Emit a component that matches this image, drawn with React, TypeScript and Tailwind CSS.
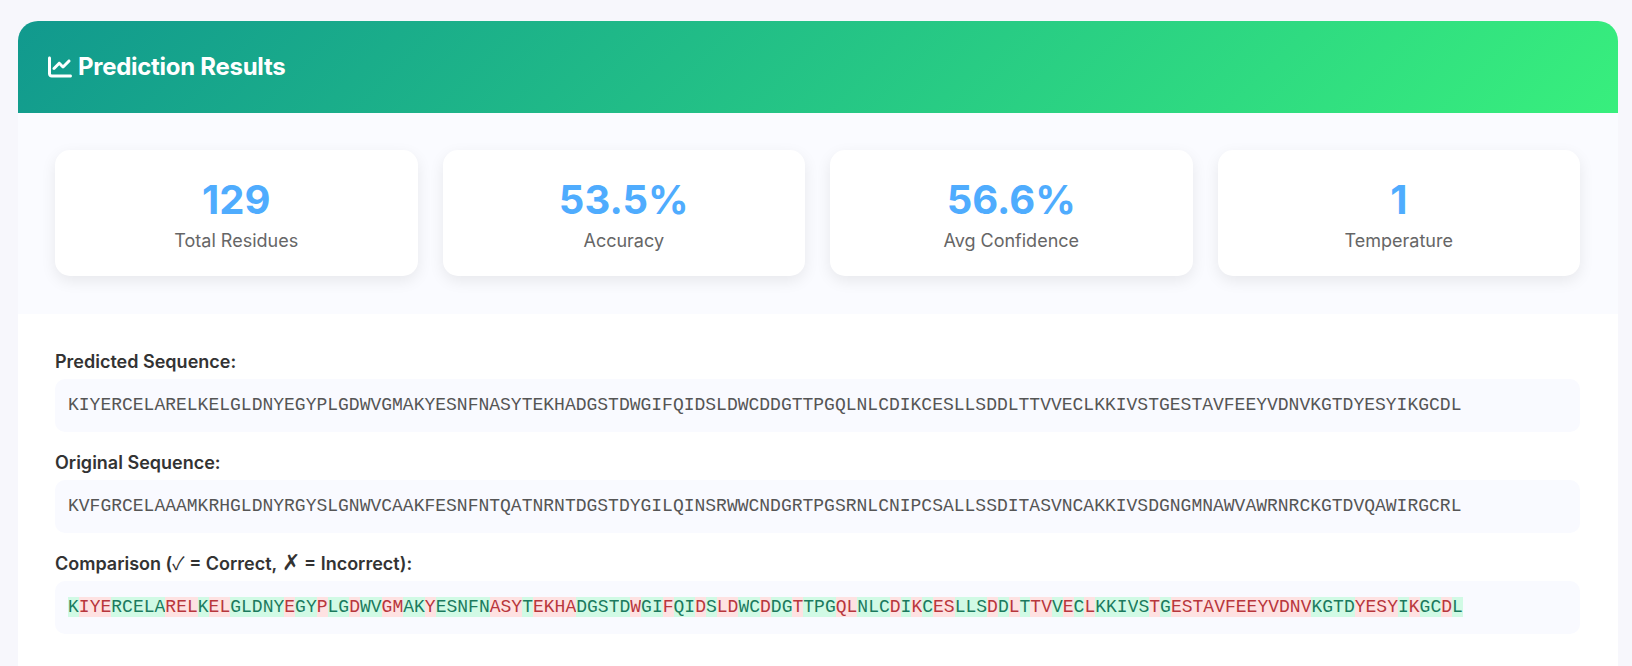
import { FaChartLine } from 'react-icons/fa6';

const predicted =
  'KIYERCELARELKELGLDNYEGYPLGDWVGMAKYESNFNASYTEKHADGSTDWGIFQIDSLDWCDDGTTPGQLNLCDIKCESLLSDDLTTVVECLKKIVSTGESTAVFEEYVDNVKGTDYESYIKGCDL';
const original =
  'KVFGRCELAAAMKRHGLDNYRGYSLGNWVCAAKFESNFNTQATNRNTDGSTDYGILQINSRWWCNDGRTPGSRNLCNIPCSALLSSDITASVNCAKKIVSDGNGMNAWVAWRNRCKGTDVQAWIRGCRL';

const stats = [
  { value: '129', label: 'Total Residues' },
  { value: '53.5%', label: 'Accuracy' },
  { value: '56.6%', label: 'Avg Confidence' },
  { value: '1', label: 'Temperature' },
];

function SequenceLabel({ children }: { children: React.ReactNode }) {
  return <div className="h-[22px] text-[18px] leading-[22px] font-semibold text-[#333]">{children}</div>;
}

function SequenceBox({ children }: { children: React.ReactNode }) {
  return (
    <div className="mb-[20px] mt-[6px] h-[53px] rounded-[10px] bg-[#f9faff] px-[13px] py-[14px] font-['Liberation_Mono',monospace] text-[18px] leading-[25px] whitespace-nowrap text-[#555]">
      {children}
    </div>
  );
}

export default function App() {
  return (
    <div className="h-[666px] overflow-hidden bg-[#f7f7fc] pl-[18px] pr-[14px] pt-[21px] font-['Inter',sans-serif]">
      <div className="h-full overflow-hidden rounded-t-[20px] bg-white">
        <div className="flex h-[92px] items-center gap-[6px] bg-[linear-gradient(135deg,#11998e,#38ef7d)] px-[30px] text-white">
          <FaChartLine className="h-6 w-6" />
          <h2 className="text-2xl font-bold tracking-[-0.28px]">Prediction Results</h2>
        </div>

        <div className="grid grid-cols-4 gap-[25px] bg-[#fafbff] pb-[38px] pl-[37px] pr-[38px] pt-[37px]">
          {stats.map((stat) => (
            <div key={stat.label} className="h-[126px] rounded-[15px] bg-white pt-[26px] text-center shadow-[0_5px_15px_rgba(0,0,0,0.08)]">
              <div className="text-[40px] leading-[48px] font-bold text-[#4facfe]">{stat.value}</div>
              <div className="mt-[6px] text-[18px] leading-[22px] text-[#666]">{stat.label}</div>
            </div>
          ))}
        </div>

        <div className="pl-[37px] pr-[38px] pt-[37px]">
          <SequenceLabel>Predicted Sequence:</SequenceLabel>
          <SequenceBox>{predicted}</SequenceBox>

          <SequenceLabel>Original Sequence:</SequenceLabel>
          <SequenceBox>{original}</SequenceBox>

          <SequenceLabel>
            Comparison (<span className="font-['Noto_Sans_CJK_JP',sans-serif] leading-[0] font-normal">✓</span> = Correct, <span className="font-['Noto_Sans_CJK_JP',sans-serif] text-[22px] leading-[0] font-normal">✗</span> = Incorrect):
          </SequenceLabel>
          <SequenceBox>
            {predicted.split('').map((residue, i) =>
              residue === original[i] ? (
                <span key={i} className="bg-[#d1fae5] text-[#1b7a5e]">{residue}</span>
              ) : (
                <span key={i} className="bg-[#fee2e2] text-[#b8363c]">{residue}</span>
              ),
            )}
          </SequenceBox>
        </div>
      </div>
    </div>
  );
}
